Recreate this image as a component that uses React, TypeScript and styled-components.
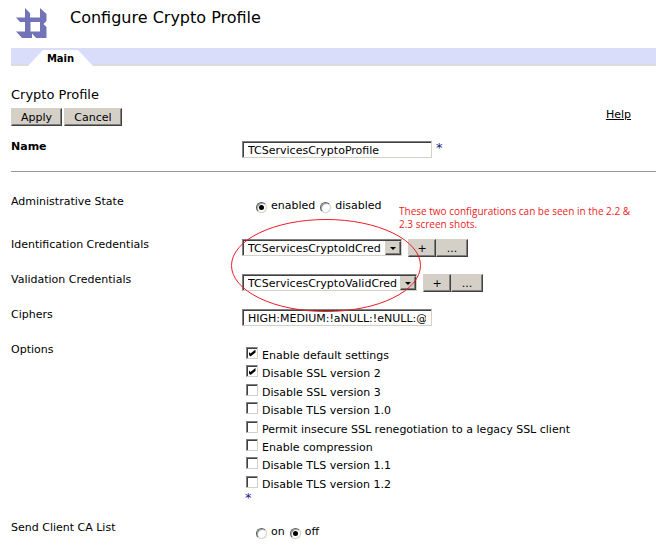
import React from "react";
import styled, { createGlobalStyle, css } from "styled-components";

const GlobalStyle = createGlobalStyle`
  * { box-sizing: border-box; }
  body {
    margin: 0;
    background: #fff;
    color: #000;
    font-family: "DejaVu Sans", Verdana, sans-serif;
    font-size: 11px;
    line-height: 14px;
  }
`;

const bevel = css`
  border: 1px solid;
  border-color: #d4d0c8 #404040 #404040 #d4d0c8;
  box-shadow: inset -1px -1px #808080;
`;

const sunken = css`
  border: 1px solid;
  border-color: #808080 #d4d0c8 #d4d0c8 #808080;
  box-shadow: inset 1px 1px #404040;
`;

const Page = styled.main`
  padding-left: 11px;
`;

const Header = styled.header`
  display: flex;
  height: 48px;
  padding: 8px 0 0 4px;
  gap: 23px;
`;

const Logo = styled.svg`
  width: 32px;
  height: 30px;
`;

const Title = styled.h1`
  margin: 0;
  font-size: 16px;
  line-height: 20px;
  font-weight: normal;
`;

const TabBar = styled.nav`
  height: 18px;
  padding: 2px 0 0 17px;
  background: linear-gradient(#d9ddf9 0 16px, #dcdcdc 16px 18px);
`;

const Tab = styled.a`
  display: block;
  width: 65px;
  height: 16px;
  padding-top: 2px;
  text-align: center;
  font-size: 10px;
  font-weight: bold;
  color: #000;
  text-decoration: none;
  background: #fff;
  clip-path: polygon(15px 0, 50px 0, 100% 100%, 0 100%);
`;

const SectionTitle = styled.h2`
  margin: 0;
  padding-top: 20px;
  font-size: 13px;
  line-height: 18px;
  font-weight: normal;
`;

const Toolbar = styled.div`
  display: flex;
  gap: 2px;
  margin: 4px 25px 0 0;
`;

const Button = styled.button<{ $width: number }>`
  ${bevel}
  width: ${(p) => p.$width}px;
  height: 18px;
  padding: 2px 0 0;
  background: #d4d0c8;
  color: #000;
  font: inherit;
`;

const HelpLink = styled.a`
  margin-left: auto;
  color: #000;
`;

const Row = styled.div<{ $height: number }>`
  display: grid;
  grid-template-columns: 231px 1fr;
  align-items: start;
  min-height: ${(p) => p.$height}px;
`;

const NameRow = styled(Row)`
  margin: 14px 0 23px;
  border-bottom: 1px solid #999;
  font-weight: bold;
`;

const Field = styled.div`
  display: flex;
  padding-top: 1px;
  font-weight: normal;
`;

const TextInput = styled.input`
  ${sunken}
  width: 190px;
  height: 17px;
  padding: 2px 5px 0;
  background: #fff;
  color: #000;
  font: inherit;
  outline: none;
`;

const Required = styled.span`
  margin-left: 4px;
  color: #1c1c8c;
  font-size: 13px;
`;

const RadioGroup = styled.div`
  display: flex;
  align-items: flex-start;
  gap: 5px;
  padding: 4px 0 0 14px;
`;

const RadioLabel = styled.label`
  display: flex;
  gap: 4px;
`;

const Radio = styled.input.attrs({ type: "radio" })`
  appearance: none;
  display: grid;
  place-items: center;
  width: 11px;
  height: 11px;
  margin: 3px 0 0;
  border: 1px solid;
  border-color: #606060 #d4d0c8 #d4d0c8 #606060;
  border-radius: 50%;
  background: #fff;
  box-shadow: inset 1px 1px #a0a0a0;
  &:checked::after {
    content: "";
    width: 5px;
    height: 5px;
    border-radius: 50%;
    background: #000;
  }
`;

const Credentials = styled.section`
  position: relative;
`;

const SelectBox = styled.div<{ $width: number }>`
  ${sunken}
  display: grid;
  width: ${(p) => p.$width}px;
  height: 17px;
  padding: 1px 0 0 1px;
  margin-right: 6px;
  background: #fff;
`;

const Select = styled.select`
  appearance: none;
  grid-area: 1 / 1;
  border: 0;
  padding: 1px 16px 0 4px;
  background: transparent;
  color: #000;
  font: inherit;
  outline: none;
`;

const Arrow = styled.span`
  ${bevel}
  grid-area: 1 / 1;
  justify-self: end;
  display: grid;
  place-items: center;
  width: 16px;
  height: 14px;
  background: #d4d0c8;
  pointer-events: none;
  &::after {
    content: "";
    border: solid transparent;
    border-width: 3px 3px 0;
    border-top-color: #000;
  }
`;

const Ellipse = styled.svg`
  position: absolute;
  left: 220px;
  top: -20px;
  width: 191px;
  height: 95px;
  pointer-events: none;
`;

const Note = styled.p`
  position: absolute;
  left: 388px;
  top: -33px;
  width: 240px;
  margin: 0;
  color: #ed1c24;
  font-family: "Open Sans", Calibri, sans-serif;
  font-size: 10px;
  line-height: 13px;
`;

const Options = styled.div`
  display: flex;
  flex-direction: column;
  height: 147px;
  margin: 4px 0 0 4px;
`;

const CheckLabel = styled.label`
  display: flex;
  flex: 1;
  gap: 4px;
  line-height: 18px;
`;

const Checkbox = styled.input.attrs({ type: "checkbox" })`
  ${sunken}
  appearance: none;
  display: grid;
  place-items: center;
  width: 12px;
  height: 12px;
  margin: 0;
  background: #fff;
  &:checked::after {
    content: "";
    width: 7px;
    height: 7px;
    background: #000;
    clip-path: polygon(0 2px, 2px 4px, 7px 0, 7px 3px, 2px 7px, 0 5px);
  }
`;

const OptionsMark = styled(Required)`
  display: block;
  margin-left: 3px;
  line-height: 8px;
`;

const options = [
  ["Enable default settings", true],
  ["Disable SSL version 2", true],
  ["Disable SSL version 3", false],
  ["Disable TLS version 1.0", false],
  ["Permit insecure SSL renegotiation to a legacy SSL client", false],
  ["Enable compression", false],
  ["Disable TLS version 1.1", false],
  ["Disable TLS version 1.2", false],
] as const;

const credentials = [
  { id: "ident", label: "Identification Credentials", value: "TCServicesCryptoIdCred", width: 160 },
  { id: "valid", label: "Validation Credentials", value: "TCServicesCryptoValidCred", width: 175 },
];

export default function App() {
  return (
    <>
      <GlobalStyle />
      <Page>
        <Header>
          <Logo viewBox="0 0 32 30" aria-hidden="true">
            <path
              fill="#7373b7"
              fillRule="evenodd"
              d="M10 0l5 5v4.500h10V0l6.500 6v7l-3 3 3 3V30H21l-4-4.500V30H7l-6-6.500h9V14H5L1 9.500h9zM15.500 14v9.500H25V14z"
            />
          </Logo>
          <Title>Configure Crypto Profile</Title>
        </Header>
        <TabBar>
          <Tab href="#main">Main</Tab>
        </TabBar>
        <SectionTitle>Crypto Profile</SectionTitle>
        <Toolbar>
          <Button type="button" $width={51}>Apply</Button>
          <Button type="button" $width={58}>Cancel</Button>
          <HelpLink href="#help">Help</HelpLink>
        </Toolbar>
        <NameRow $height={32}>
          <label htmlFor="name">Name</label>
          <Field>
            <TextInput id="name" defaultValue="TCServicesCryptoProfile" />
            <Required>*</Required>
          </Field>
        </NameRow>
        <Row $height={43}>
          <span id="admin">Administrative State</span>
          <RadioGroup role="radiogroup" aria-labelledby="admin">
            <RadioLabel><Radio name="admin" defaultChecked />enabled</RadioLabel>
            <RadioLabel><Radio name="admin" />disabled</RadioLabel>
          </RadioGroup>
        </Row>
        <Credentials>
          {credentials.map((c) => (
            <Row key={c.id} $height={35}>
              <label htmlFor={c.id}>{c.label}</label>
              <Field>
                <SelectBox $width={c.width}>
                  <Select id={c.id}><option>{c.value}</option></Select>
                  <Arrow />
                </SelectBox>
                <Button type="button" $width={28}>+</Button>
                <Button type="button" $width={32}>...</Button>
              </Field>
            </Row>
          ))}
          <Note>These two configurations can be seen in the 2.2 &amp; 2.3 screen shots.</Note>
          <Ellipse viewBox="0 0 191 95" aria-hidden="true">
            <ellipse cx="95" cy="47.5" rx="94.500" ry="46" fill="none" stroke="#ed1c24" />
          </Ellipse>
        </Credentials>
        <Row $height={35}>
          <label htmlFor="ciphers">Ciphers</label>
          <Field>
            <TextInput id="ciphers" defaultValue="HIGH:MEDIUM:!aNULL:!eNULL:@" />
          </Field>
        </Row>
        <Row $height={178}>
          <span id="options">Options</span>
          <div role="group" aria-labelledby="options">
            <Options>
              {options.map(([label, on]) => (
                <CheckLabel key={label}><Checkbox defaultChecked={on} />{label}</CheckLabel>
              ))}
            </Options>
            <OptionsMark>*</OptionsMark>
          </div>
        </Row>
        <Row $height={35}>
          <span id="calist">Send Client CA List</span>
          <RadioGroup role="radiogroup" aria-labelledby="calist">
            <RadioLabel><Radio name="calist" />on</RadioLabel>
            <RadioLabel><Radio name="calist" defaultChecked />off</RadioLabel>
          </RadioGroup>
        </Row>
      </Page>
    </>
  );
}
